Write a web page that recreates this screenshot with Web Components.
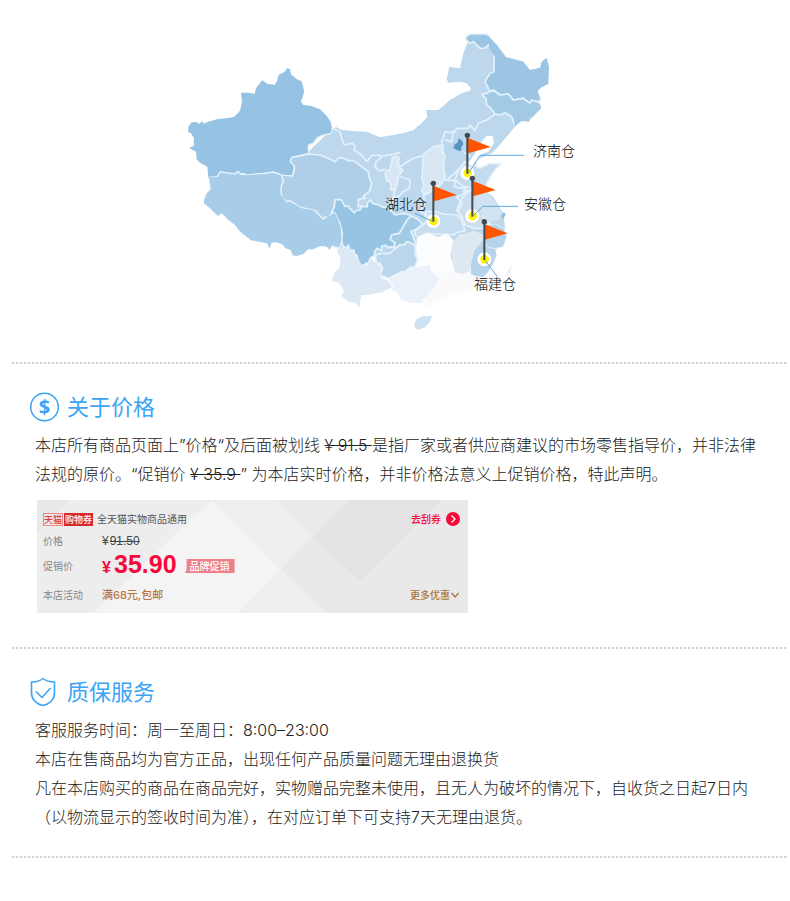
<!DOCTYPE html>
<html lang="zh-CN">
<head>
<meta charset="utf-8">
<title>店铺说明</title>
<style>
  body { margin: 0; background: #fff; color: #222; font-family: Inter, "Noto Sans CJK SC", sans-serif; font-size: 16px; font-weight: 300; }
</style>
</head>
<body>
<shop-notice></shop-notice>

<template id="t-map">
<style>
  :host { display: flex; justify-content: center; padding: 20px 0 22px; }
  .canvas { position: relative; width: 430px; height: 320px; }
  svg { display: block; width: 100%; height: 100%; }
  span { position: absolute; font-size: 14px; line-height: 20px; white-space: nowrap; color: #000; }
</style>
<div class="canvas">
<svg viewBox="0 0 1290 960" role="img" aria-label="仓库分布图">
  <g stroke-linejoin="round" stroke-linecap="round">
  <path fill="#bdd8ec" d="M458,325 470,322 485,330 520,333 560,335 600,352 640,345 675,338 700,330 725,310 742,290 738,270 775,270 810,240 845,220 870,212 873,205 860,190 840,185 805,188 800,178 808,140 840,145 850,100 862,70 858,50 870,42 920,42 950,75 978,112 1030,125 1083,265 1050,300 1025,300 1005,320 980,350 950,385 935,400 890,420 888,435 900,445 930,430 962,432 945,450 925,485 905,505 940,530 970,580 978,650 940,700 900,720 700,720 480,690 380,400Z"/>
  <g stroke="#e3f2fc" stroke-width="5">
  <path fill="#96c3e3" d="M458,325 453,340 430,345 412,353 400,370 387,374 384,385 387,400 365,406 335,412 330,425 343,438 343,450 337,468 310,466 300,462 280,456 255,460 215,465 200,465 192,460 180,463 175,454 165,462 150,460 120,455 112,470 85,470 250,350Z"/>
  <path fill="#a8cde8" d="M85,470 112,470 120,455 150,460 165,462 175,454 180,463 200,465 255,460 280,456 305,465 310,485 303,498 303,520 308,535 320,545 330,542 345,552 365,562 400,568 410,580 430,598 436,590 444,594 455,580 465,575 475,595 485,620 487,660 478,685 350,650 150,550Z"/>
  <path fill="#afcfe8" d="M337,468 343,450 343,438 330,425 335,412 387,402 420,405 445,415 465,425 478,412 495,417 505,422 520,422 545,440 565,455 568,475 575,490 572,502 568,515 553,525 550,530 556,534 535,538 535,560 545,558 540,570 525,580 500,562 495,560 480,540 465,540 463,562 455,580 444,594 436,590 430,598 405,572 360,562 345,552 330,542 320,545 308,535 303,520 303,498 310,485 305,465Z"/>
  <path fill="#96c4e2" d="M465,540 478,538 486,542 495,560 505,558 510,566 523,578 530,571 540,570 545,560 562,560 562,550 570,540 578,550 590,553 610,562 622,562 645,585 670,580 690,585 692,590 680,602 670,620 658,640 635,645 631,658 645,668 640,682 630,680 624,684 618,676 605,678 605,692 592,685 583,695 585,705 570,715 565,730 558,730 548,738 538,730 530,705 523,703 522,690 510,690 505,675 500,688 495,680 490,685 485,660 487,640 480,610 465,580 455,575 463,562Z"/>
  <path fill="#a3cbe5" d="M692,587 712,597 727,610 722,618 705,630 693,634 705,665 708,683 695,670 680,665 672,675 660,675 648,684 642,682 645,668 631,658 635,645 658,640 670,620 680,602Z"/>
  <path fill="#bad6ec" d="M585,705 605,700 630,700 648,684 660,675 672,675 680,665 695,670 708,683 704,700 712,720 705,740 690,742 675,755 665,755 645,765 625,775 600,765 608,745 600,730 590,728Z"/>
  <path fill="#d9e6f3" d="M730,405 740,395 760,380 785,375 785,395 795,405 790,440 796,470 785,490 770,505 735,525 725,512 732,495 726,480 728,440Z"/>
  <path fill="#d9e6f3" d="M635,425 637,412 648,408 657,413 655,430 658,443 668,450 655,470 652,490 645,510 632,510 634,490 620,480 615,460 622,450 630,450Z"/>
  <path fill="#c6deef" d="M705,632 735,610 745,600 735,588 738,575 770,575 790,582 830,585 845,600 855,632 830,638 820,645 740,640 715,652 705,645Z"/>
  <path fill="#ccdff0" d="M845,535 865,515 880,510 892,530 910,560 910,590 930,610 910,625 880,625 855,615 845,590 830,570Z"/>
  <path fill="#c3dbee" d="M835,450 855,425 880,435 900,445 930,430 962,432 945,450 930,470 915,500 890,505 850,500 825,480Z"/>
  <path fill="#9bc5e3" d="M870,70 858,60 858,50 870,42 920,42 950,75 978,112 1010,120 1080,240 1073,248 1055,240 1050,250 1030,235 1000,240 985,222 960,225 940,210 930,215 915,185 930,160 942,155 943,85 930,72 915,84 900,85 880,65Z"/>
  <path fill="#a3cae5" d="M930,215 940,210 960,225 985,222 1000,240 1030,235 1050,250 1055,240 1080,247 1060,280 1005,318 995,290 975,278 960,285 945,282 930,262 920,255 918,235 905,223 920,220Z"/>
  </g>
  <path fill="#96c3e3" d="M25,320 35,307 50,306 57,312 67,303 70,311 83,306 110,298 145,294 163,290 180,272 186,245 183,218 205,218 224,221 228,204 247,181 262,191 285,194 292,180 296,164 315,155 320,145 330,147 333,163 350,177 365,184 373,215 363,245 370,255 395,258 420,268 438,285 452,305 456,325 452,338 430,343 410,351 398,368 385,372 382,385 384,398 333,410 328,425 340,438 335,465 310,464 280,453 255,457 200,462 175,452 150,458 120,452 110,468 85,470 82,440 60,428 50,418 48,395 27,384 41,378 42,355 33,340 25,337Z"/>
  <path fill="#a8cde8" d="M85,472 113,472 122,458 150,463 170,465 175,458 182,466 255,463 280,459 302,467 306,485 301,498 301,522 320,548 330,545 365,565 400,571 430,601 455,583 464,578 473,597 482,622 484,660 478,682 465,675 455,676 450,690 440,680 420,678 400,688 385,688 370,702 350,708 338,706 332,690 315,684 310,675 290,667 275,668 268,688 262,670 225,663 212,660 180,635 165,615 145,600 125,580 113,588 90,565 72,550 72,540 80,520 92,508 88,480Z"/>
  <path fill="#9bc5e3" d="M922,45 950,75 978,112 1030,125 1050,150 1080,143 1085,125 1100,113 1107,140 1105,192 1085,202 1073,212 1082,240 1050,235 1000,180 930,90Z"/>
  <path fill="#a3cae5" d="M1000,250 1080,252 1083,265 1058,290 1045,292 1050,305 1022,303 1004,320Z"/>
  <path fill="#fff" d="M905,365 920,347 938,348 942,370 925,395 905,402 885,430 878,442 865,430 885,400Z"/>
  <path fill="#dce8f4" d="M480,685 490,683 500,688 505,682 513,695 523,703 530,715 548,740 565,732 572,717 590,730 605,742 600,770 625,783 637,800 610,815 590,820 565,825 545,825 540,840 540,862 525,848 505,845 485,828 492,812 478,790 455,782 465,755 478,745 482,715 470,690Z"/>
  <path fill="#ebf1f8" d="M625,777 675,757 705,742 750,735 752,750 775,775 765,800 750,815 740,835 730,835 725,850 710,850 690,848 660,838 655,820 635,808 640,798Z"/>
  <path fill="#fafafc" d="M750,733 830,755 870,762 960,755 930,785 870,815 820,822 780,842 740,860 728,850 745,820 770,795 775,772Z"/>
  <path fill="#fbfdfe" d="M710,655 725,645 745,640 775,650 800,640 820,660 828,680 812,700 815,735 830,755 790,762 750,735 715,720 708,700Z"/>
  <path fill="#dde8f3" d="M815,675 835,645 885,632 910,645 905,665 885,690 875,725 868,755 845,762 825,757 815,720Z"/>
  <g fill="#b5d3ea">
   <path d="M885,690 910,675 930,690 945,688 950,705 940,730 925,755 910,772 888,768 872,762 872,735Z"/>
   <path stroke="#e3f2fc" stroke-width="3" d="M922,615 945,612 972,625 980,650 970,680 945,686 922,680 908,660Z"/>
   <path fill="#8dbfdf" d="M958,578 975,578 977,585 970,595 957,590Z"/>
  </g>
  <path fill="#d1e3f2" d="M885,508 920,512 945,545 968,575 960,600 930,605 910,585 895,548Z"/>
  <path fill="#eef3f8" d="M980,755 995,735 993,755 975,770Z"/>
  <path fill="#cfe2f1" d="M703,910 710,898 730,888 757,888 750,905 735,922 715,930 705,925Z"/>
  <path fill="#5595bf" d="M825,372 833,368 836,355 846,362 850,372 844,382 843,393 832,391 820,384Z"/>
  <g fill="none" stroke="#e3f2fc" stroke-width="5">
   <path d="M456,325 480,335 485,355 493,375 517,370 525,378 522,390 545,405 560,425 575,407 598,405 602,415 588,425 585,440 598,453 615,448 M600,410 640,402 660,398"/>
   <path d="M787,402 790,380 785,365 795,335 810,338 825,335 830,325 865,325 870,315 885,332 895,310 920,300 945,283 M855,425 835,450 800,480 793,480"/>
   <path d="M658,443 675,430 700,415 725,408 M663,470 690,480 688,505 670,515 655,530 640,532 630,555 M645,510 640,532"/>
   <path d="M793,480 825,482 823,500 845,505 855,500 860,515 845,525 830,530 845,550 835,575 848,600 M730,525 735,550 720,575 740,585"/>
   <path d="M820,340 815,365 795,360 M850,395 870,410 M855,500 850,515 890,505"/>
  </g>
  </g>
  <g id="pins"></g>
  <g fill="none" stroke="#5fa8e0" stroke-width="3">
   <path d="M864,462 900,406 1032,406M878,590 908,559 1014,559M705,580 760,605M916,722 952,770"/>
  </g>
</svg>
<span style="left:353px;top:121px">济南仓</span>
<span style="left:344px;top:174px">安徽仓</span>
<span style="left:205px;top:174px">湖北仓</span>
<span style="left:294px;top:254px">福建仓</span>
</div>
</template>

<template id="t-section">
<style>
  :host { display: block; padding: 28px 12px 24px 30px; }
  header { display: flex; align-items: center; gap: 7px; height: 30px; }
  .icon { display: flex; width: 30px; height: 30px; }
  h2 { margin: 0; font-size: 22px; line-height: 30px; font-weight: 400; color: #3ba4f4; }
  .body { padding: 9px 0 0 5px; line-height: 29px; }
</style>
<header><span class="icon"><slot name="icon"></slot></span><h2><slot name="title"></slot></h2></header>
<div class="body"><slot></slot></div>
</template>

<template id="t-coupon">
<style>
  :host { display: block; max-width: 431px; margin: 11px 0 10px 2px; }
  .card { position: relative; display: grid; grid-template-columns: 1fr auto; grid-template-rows: 18px 26px 24px 34px; align-items: center; padding: 10px 8px 1px 6px; background: #e9e9e9; font-size: 10px; line-height: 14px; font-weight: 400; color: #888; overflow: hidden; }
  .bg { position: absolute; inset: 0; width: 100%; height: 100%; }
  .row { position: relative; display: flex; align-items: center; white-space: nowrap; }
  .wide { grid-column: 1 / -1; }
  .label { width: 59px; }
  .tag { box-sizing: border-box; height: 13px; border: 1px solid #e88; font-size: 9px; line-height: 11px; font-weight: 500; color: #e0393c; }
  .tag.fill { background: #d8282c; border-color: #d8282c; color: #fff; margin: 0 4px 0 1px; }
  .name { color: #555; }
  .old { font: 12px/14px "Liberation Sans", sans-serif; color: #444; }
  s { margin-left: 1px; }
  .price { display: flex; align-items: baseline; color: #f5093a; font: bold 25px/24px "Liberation Sans", sans-serif; }
  .price small { font-size: 16px; width: 12px; }
  .promo { margin-left: 8px; padding: 0 5px; line-height: 14px; background: #ee808c; color: #fff; font-weight: 500; clip-path: polygon(2px 0, 100% 0, 100% 100%, 0 100%, 2px 80%); }
  .deal { color: #b9763c; font-size: 11px; font-weight: 500; }
  a, button { position: relative; display: flex; align-items: center; justify-content: flex-end; border: 0; padding: 0; background: none; font: inherit; font-weight: 500; text-decoration: none; white-space: nowrap; }
  a { color: #f5093a; gap: 5px; }
  button { color: #a87444; }
</style>
<div class="card">
  <svg class="bg" viewBox="0 0 431 113" preserveAspectRatio="none" aria-hidden="true">
    <path fill="#f0efef" d="M0,0H40L170,0 290,113H0Z"/><path fill="#e9e8e9" d="M0,0H33L0,33Z"/>
    <path fill="#ededee" d="M0,36 38,0H170L56,113H0Z"/>
    <path fill="#f5f4f5" d="M56,113 175,0 245,70 202,113Z"/>
    <path fill="#efeeef" d="M175,0H312L243,70Z"/><path fill="#ebeaeb" d="M240,0H312L276,36Z"/>
    <path fill="#efefef" d="M243,70 286,113H202Z"/>
    <path fill="#e4e2e3" d="M312,0H404L323,82 276,36Z"/>
  </svg>
  <div class="row"><span class="tag">天猫</span><span class="tag fill">购物券</span><span class="name">全天猫实物商品通用</span></div>
  <a href="#coupon">去刮券<svg width="14" height="14" viewBox="0 0 14 14" aria-hidden="true"><circle cx="7" cy="7" r="7" fill="#f5093a"/><path d="M5.500 3.500 9 7 5.500 10.500" fill="none" stroke="#fff" stroke-width="1.300"/></svg></a>
  <div class="row wide"><span class="label">价格</span><span class="old">¥<s>91.50</s></span></div>
  <div class="row wide"><span class="label">促销价</span><span class="price"><small>¥</small>35.90</span><span class="promo">品牌促销</span></div>
  <div class="row"><span class="label">本店活动</span><span class="deal">满68元,包邮</span></div>
  <button type="button">更多优惠<svg width="10" height="8" viewBox="0 0 10 8" aria-hidden="true"><path d="M1.500 2 5 6 8.500 2" fill="none" stroke="#a87444" stroke-width="1.300"/></svg></button>
</div>
</template>

<template id="t-page">
<style>
  :host { display: block; padding-bottom: 43px; }
  hr { height: 2px; margin: 0 2px 0 12px; border: 0; background: repeating-linear-gradient(90deg, #d2d2d2 0 2px, #f6f6f6 2px 4px); }
  p { margin: 0; }
  svg { display: block; overflow: visible; }
  text { font: bold 20px/20px "Noto Sans", sans-serif; }
</style>
<warehouse-map></warehouse-map>
<hr>
<notice-section>
  <svg slot="icon" width="30" height="30" viewBox="0 0 30 30" aria-hidden="true"><circle cx="14.500" cy="15" r="13.800" fill="none" stroke="#3ba4f4" stroke-width="1.500"/><text x="14.500" y="22" text-anchor="middle" fill="#3ba4f4">$</text></svg>
  <span slot="title">关于价格</span>
  <p>本店所有商品页面上”价格“及后面被划线 <s>¥ 91.5 </s>是指厂家或者供应商建议的市场零售指导价，并非法律<br>法规的原价。“促销价 <s>¥ 35.9 </s>” 为本店实时价格，并非价格法意义上促销价格，特此声明。</p>
  <coupon-card></coupon-card>
</notice-section>
<hr>
<notice-section>
  <svg slot="icon" width="30" height="30" viewBox="0 0 30 30" fill="none" stroke="#3ba4f4" stroke-width="1.600" stroke-linejoin="round" aria-hidden="true"><path d="M13 1.500C10 4 6 5 1.500 5V16C1.500 22 6 27 13 28.500C20 27 24.500 22 24.500 16V5C20 5 16 4 13 1.500Z"/><path d="M6 14.500 12 20.500 20.500 11"/></svg>
  <span slot="title">质保服务</span>
  <p>客服服务时间：周一至周日：8:00–23:00</p>
  <p>本店在售商品均为官方正品，出现任何产品质量问题无理由退换货</p>
  <p>凡在本店购买的商品在商品完好，实物赠品完整未使用，且无人为破坏的情况下，自收货之日起7日内<br>（以物流显示的签收时间为准），在对应订单下可支持7天无理由退货。</p>
</notice-section>
<hr>
</template>

<script>
  class Base extends HTMLElement {
    constructor() {
      super();
      const t = document.getElementById(this.constructor.template);
      this.attachShadow({ mode: "open" }).append(t.content.cloneNode(true));
    }
  }
  class WarehouseMap extends Base {
    static template = "t-map";
    connectedCallback() {
      const pins = [[862, 346], [760, 490], [877, 475], [913, 605]];
      this.shadowRoot.getElementById("pins").innerHTML = pins.map(([x, y]) =>
        `<g transform="translate(${x} ${y})"><circle cy="113" r="21" fill="#fff"/><circle cx="1" cy="113" r="13" fill="#fff100"/><path d="M2 8 70 35 2 54Z" fill="#ff5500"/><path d="M0 0V115" stroke="#444b4f" stroke-width="6"/><circle r="8" fill="#444b4f"/></g>`).join("");
    }
  }
  class NoticeSection extends Base { static template = "t-section"; }
  class CouponCard extends Base { static template = "t-coupon"; }
  class ShopNotice extends Base { static template = "t-page"; }
  customElements.define("warehouse-map", WarehouseMap);
  customElements.define("notice-section", NoticeSection);
  customElements.define("coupon-card", CouponCard);
  customElements.define("shop-notice", ShopNotice);
</script>
</body>
</html>
